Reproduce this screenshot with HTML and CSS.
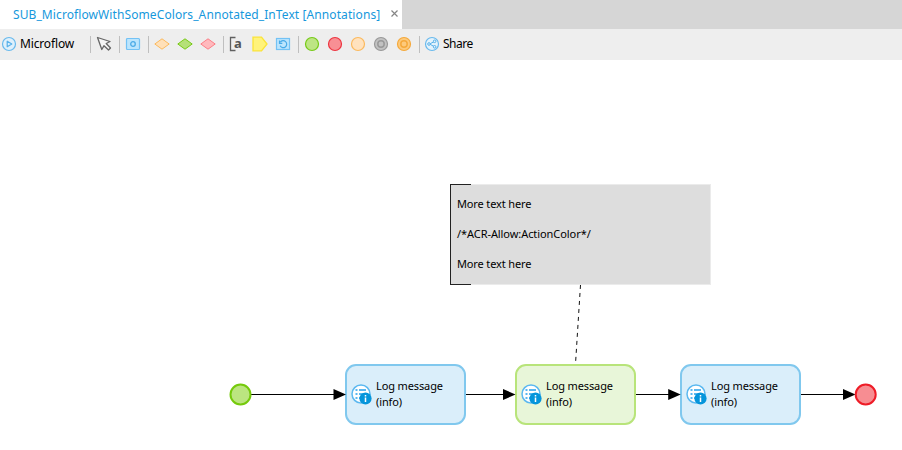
FILE: index.html
```html
<!DOCTYPE html>
<html lang="en">
<head>
<meta charset="utf-8">
<title>Microflow editor</title>
<link rel="stylesheet" href="styles.css">
</head>
<body>
<svg width="0" height="0" class="defs">
  <defs>
    <symbol id="log" viewBox="0 0 22 22">
      <circle cx="10" cy="10" r="9" fill="#fff" stroke="#5bb8f0" stroke-width="1.5"/>
      <path d="M4.500 6h2M4.500 10h2M4.500 14h2M8 6h7M8 10h7M8 14h4" stroke="#5bb8f0" stroke-width="1.800"/>
      <circle cx="14.500" cy="14.500" r="6.100" fill="#0595db"/>
      <path d="M14.500 11v1.500M14.500 13.500v4.500" stroke="#fff" stroke-width="1.500"/>
    </symbol>
  </defs>
</svg>
<header class="tabs">
  <div class="tab"><span class="tab-title">SUB_MicroflowWithSomeColors_Annotated_InText [Annotations]</span>
    <svg class="close" width="7" height="7" viewBox="0 0 7 7"><path d="M.5 .5l6 6M6.500 .5l-6 6" stroke="#858585" stroke-width="1.200"/></svg>
  </div>
</header>
<nav class="toolbar">
  <div class="label microflow">
    <svg width="16" height="16" viewBox="0 0 16 16"><circle cx="8" cy="8" r="6.500" fill="#dff0fb" stroke="#68b9ed" stroke-width="1.200"/><path d="M6.200 5.200v5.600l4.600-2.800z" fill="none" stroke="#58b1ea" stroke-width="1.200" stroke-linejoin="round"/></svg>
    <span class="label-text micro-text">Microflow</span>
  </div>
  <i class="sep"></i>
  <div class="tool"><svg width="16" height="16" viewBox="0 0 16 16"><path d="M1.500 1.500l12.500 4-3.800 2 4.300 4.500-2 2-4.500-4.300-2.200 3.800z" fill="#f4f4f4" stroke="#666" stroke-width="1.300" stroke-linejoin="round"/></svg></div>
  <i class="sep"></i>
  <div class="tool"><svg width="16" height="16" viewBox="0 0 16 16"><rect x="1.500" y="2.500" width="13" height="11" rx="1" fill="#bce5fd" stroke="#73c2f5" stroke-width="1.200"/><circle cx="8" cy="8" r="2.300" fill="none" stroke="#4cabe7" stroke-width="1.300"/></svg></div>
  <i class="sep"></i>
  <div class="tool"><svg width="16" height="16" viewBox="0 0 16 16"><path d="M.8 8L8 2.800 15.200 8 8 13.200z" fill="#ffe0b8" stroke="#fbb95d"/></svg></div>
  <div class="tool"><svg width="16" height="16" viewBox="0 0 16 16"><path d="M.8 8L8 2.800 15.200 8 8 13.200z" fill="#b5e078" stroke="#78ca17"/></svg></div>
  <div class="tool"><svg width="16" height="16" viewBox="0 0 16 16"><path d="M.8 8L8 2.800 15.200 8 8 13.200z" fill="#ffb9bd" stroke="#fb7f87"/></svg></div>
  <i class="sep"></i>
  <div class="tool bracket"><svg width="7" height="16" viewBox="0 0 7 16"><path d="M6.500 1.500h-5v13h5" fill="none" stroke="#606060" stroke-width="1.300"/></svg><span class="letter">a</span></div>
  <div class="tool"><svg width="16" height="16" viewBox="0 0 16 16"><path d="M1 1.200h8.500l5.500 6.800-5.500 6.800H1z" fill="#fff37b" stroke="#fbe436" stroke-width="1.300"/></svg></div>
  <div class="tool"><svg width="16" height="16" viewBox="0 0 16 16"><rect x="1.500" y="2.500" width="13" height="11" fill="#bce5fd" stroke="#73c2f5" stroke-width="1.200"/><path d="M5.300 6.200A3.500 3.500 0 1 1 5.100 9.800M4.500 4.500v2.800h2.800" fill="none" stroke="#48aae8" stroke-width="1.200"/></svg></div>
  <i class="sep"></i>
  <div class="tool"><svg width="16" height="16" viewBox="0 0 16 16"><circle cx="8" cy="8" r="6.500" fill="#bde584" stroke="#76ca17" stroke-width="1.200"/></svg></div>
  <div class="tool"><svg width="16" height="16" viewBox="0 0 16 16"><circle cx="8" cy="8" r="6.500" fill="#f88f94" stroke="#ed3540" stroke-width="1.200"/></svg></div>
  <div class="tool"><svg width="16" height="16" viewBox="0 0 16 16"><circle cx="8" cy="8" r="6.500" fill="#ffe2be" stroke="#fbb95d" stroke-width="1.200"/></svg></div>
  <div class="tool"><svg width="16" height="16" viewBox="0 0 16 16"><circle cx="8" cy="8" r="6.500" fill="#c2c2c2" stroke="#999" stroke-width="1.200"/><circle cx="8" cy="8" r="3.200" fill="#c2c2c2" stroke="#999" stroke-width="1.500"/></svg></div>
  <div class="tool"><svg width="16" height="16" viewBox="0 0 16 16"><circle cx="8" cy="8" r="6.500" fill="#fdca7c" stroke="#f5a93c" stroke-width="1.200"/><circle cx="8" cy="8" r="3.200" fill="#fdca7c" stroke="#f5a93c" stroke-width="1.500"/></svg></div>
  <i class="sep"></i>
  <div class="label share">
    <svg width="16" height="16" viewBox="0 0 16 16"><circle cx="8" cy="8" r="6.500" fill="#e4f3fc" stroke="#68b9ed" stroke-width="1.200"/><path d="M10.500 5.500L5.500 8l5 2.700" fill="none" stroke="#58b1ea"/><circle cx="10.600" cy="5.300" r="1.300" fill="#e4f3fc" stroke="#58b1ea"/><circle cx="5" cy="8" r="1.300" fill="#e4f3fc" stroke="#58b1ea"/><circle cx="10.600" cy="10.800" r="1.300" fill="#e4f3fc" stroke="#58b1ea"/></svg>
    <span class="label-text share-text">Share</span>
  </div>
</nav>
<main class="canvas">
  <div class="note">
    <p class="more">More text here</p>
    <p class="rule">/*ACR-Allow:ActionColor*/</p>
    <p class="more">More text here</p>
  </div>
  <div class="node first"><svg width="22" height="22"><use href="#log"/></svg><div class="caption"><span>Log message</span><br><span class="info">(info)</span></div></div>
  <div class="node second"><svg width="22" height="22"><use href="#log"/></svg><div class="caption"><span>Log message</span><br><span class="info">(info)</span></div></div>
  <div class="node third"><svg width="22" height="22"><use href="#log"/></svg><div class="caption"><span>Log message</span><br><span class="info">(info)</span></div></div>
  <svg class="flows" width="902" height="390" viewBox="0 60 902 390">
    <path d="M450.500 184v101M450 184.500h21M450 284.500h21" stroke="#222" stroke-width="1"/>
    <path d="M580.500 285L575.500 364" stroke="#111" stroke-width="1" stroke-dasharray="4 4"/>
    <path d="M250 394.500h90M466 394.500h42M636 394.500h37M801 394.500h47" stroke="#000" stroke-width="1"/>
    <path d="M333.500 389v11l12.500-5.500zM503 389v11l12.500-5.500zM668.200 389v11l12.500-5.500zM843 389v11l12.500-5.500z"/>
    <circle cx="240.500" cy="394.500" r="10" fill="#bbe580" stroke="#75ca0c" stroke-width="2"/>
    <circle cx="865.700" cy="394.500" r="10" fill="#f78d92" stroke="#ee1c27" stroke-width="2"/>
  </svg>
</main>
</body>
</html>
```
FILE: styles.css
```css
body {
  margin: 0;
  width: 902px;
  height: 450px;
  overflow: hidden;
  background: #fff;
  color: #000;
  font: 11px/16px "Noto Sans", sans-serif;
}
.defs { position: absolute; }
svg { display: block; flex: none; }
.tabs { height: 29px; background: #d6d6d6; }
.tab {
  display: flex;
  align-items: center;
  box-sizing: border-box;
  width: 402px;
  height: 29px;
  padding-left: 13px;
  background: #fff;
  color: #1698dc;
}
.tab-title {
  width: 377.5px;
  font: 12px/18px "Noto Sans", sans-serif;
  letter-spacing: 0.095px;
  white-space: nowrap;
}
.close { margin-bottom: 3px; }
.toolbar {
  display: flex;
  align-items: center;
  box-sizing: border-box;
  height: 31px;
  padding-bottom: 1px;
  background: #eee;
}
.label { display: flex; align-items: center; }
.microflow { box-sizing: border-box; width: 86px; padding-left: 1px; }
.label-text { margin-left: 3px; font-size: 12px; white-space: nowrap; }
.micro-text { letter-spacing: -0.15px; }
.share-text { letter-spacing: -0.5px; }
.share { padding-left: 2px; }
.sep { flex: none; width: 1px; height: 17px; margin: 0 2px 0 3px; background: #bfbfbf; }
.microflow + .sep { margin-left: 4px; }
.tool {
  display: flex;
  flex: none;
  justify-content: center;
  align-items: center;
  box-sizing: border-box;
  width: 23px;
  padding-right: 1px;
}
.bracket { justify-content: flex-start; padding-left: 3px; }
.letter { margin: -2px 0 0 -2px; color: #555; font: bold 13px/14px "Noto Sans", sans-serif; }
.canvas { position: relative; height: 390px; }
.note {
  position: absolute;
  left: 450px;
  top: 124px;
  box-sizing: border-box;
  width: 261px;
  height: 101px;
  padding: 11px 6px;
  border: 1px solid #ebebeb;
  background: #ddd;
}
.note p { margin: 0 0 14px; white-space: nowrap; }
.more { letter-spacing: -0.13px; }
.rule { letter-spacing: -0.07px; }
.node {
  position: absolute;
  top: 304px;
  display: flex;
  align-items: center;
  box-sizing: border-box;
  width: 121px;
  height: 61px;
  padding-left: 4px;
  border: 2px solid #80c8ee;
  border-radius: 11px;
  background: #daeefa;
}
.node svg { margin-top: 1px; }
.first { left: 345px; }
.second { left: 515px; border-color: #b8e47a; background: #e8f6d9; }
.third { left: 680px; }
.caption { margin: 0 0 1px 3px; letter-spacing: -0.12px; white-space: nowrap; }
.flows { position: absolute; inset: 0; }
```
